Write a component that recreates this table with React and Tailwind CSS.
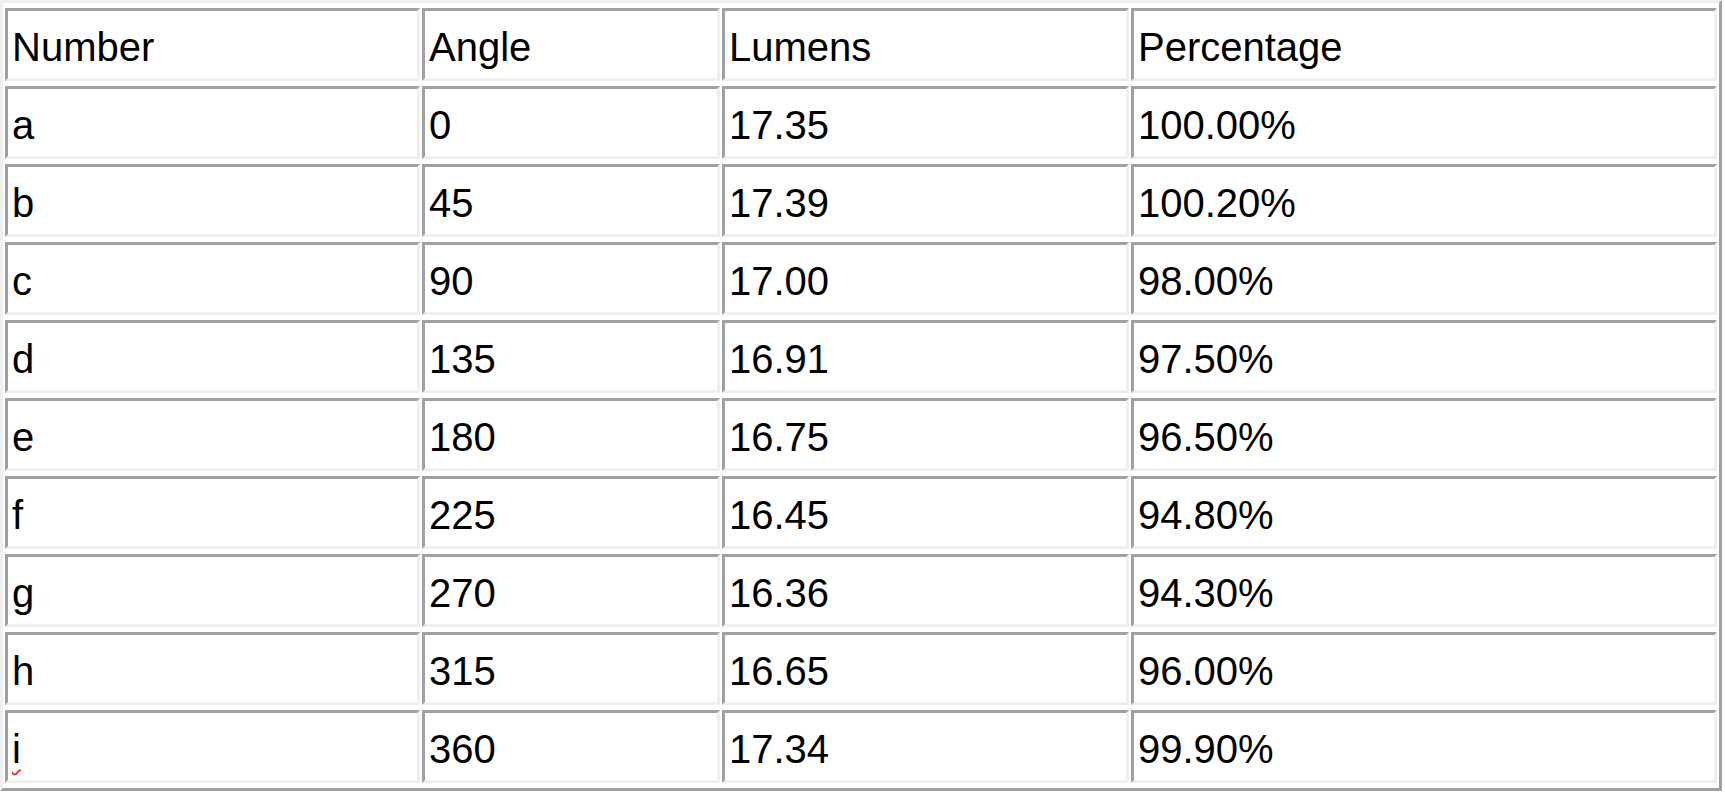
import React from 'react';

const rows = [
  ['a', '0', '17.35', '100.00%'],
  ['b', '45', '17.39', '100.20%'],
  ['c', '90', '17.00', '98.00%'],
  ['d', '135', '16.91', '97.50%'],
  ['e', '180', '16.75', '96.50%'],
  ['f', '225', '16.45', '94.80%'],
  ['g', '270', '16.36', '94.30%'],
  ['h', '315', '16.65', '96.00%'],
  ['i', '360', '17.34', '99.90%'],
];

const cell =
  'h-[73px] border-[3px] border-t-[#a0a0a0] border-l-[#a0a0a0] border-b-[#efefef] border-r-[#efefef] pl-[4px] pr-1 pt-[4px] pb-0 align-middle text-left font-normal whitespace-nowrap';

const App = () => {
  return (
    <div className="min-h-screen bg-white text-black" style={{ fontFamily: '"Liberation Sans", Arial, sans-serif' }}>
      <table className="w-[1722px] table-fixed border-separate border-spacing-x-[2px] border-spacing-y-[5px] border-[3px] border-t-[#efefef] border-l-[#efefef] border-b-[#a0a0a0] border-r-[#a0a0a0] text-[40px] leading-normal">
        <colgroup>
          <col className="w-[415px]" />
          <col className="w-[298px]" />
          <col className="w-[407px]" />
          <col className="w-[586px]" />
        </colgroup>
        <thead>
          <tr>
            <th className={cell}>Number</th>
            <th className={cell}>Angle</th>
            <th className={cell}>Lumens</th>
            <th className={cell}>Percentage</th>
          </tr>
        </thead>
        <tbody>
          {rows.map((r, i) => (
            <tr key={i}>
              <td className={cell}>
                {r[0] === 'i' ? (
                  <span className="underline decoration-wavy decoration-[#e03030] decoration-2 underline-offset-[6px]">i</span>
                ) : (
                  r[0]
                )}
              </td>
              <td className={cell}>{r[1]}</td>
              <td className={cell}>{r[2]}</td>
              <td className={cell}>{r[3]}</td>
            </tr>
          ))}
        </tbody>
      </table>
    </div>
  );
};

export default App;
